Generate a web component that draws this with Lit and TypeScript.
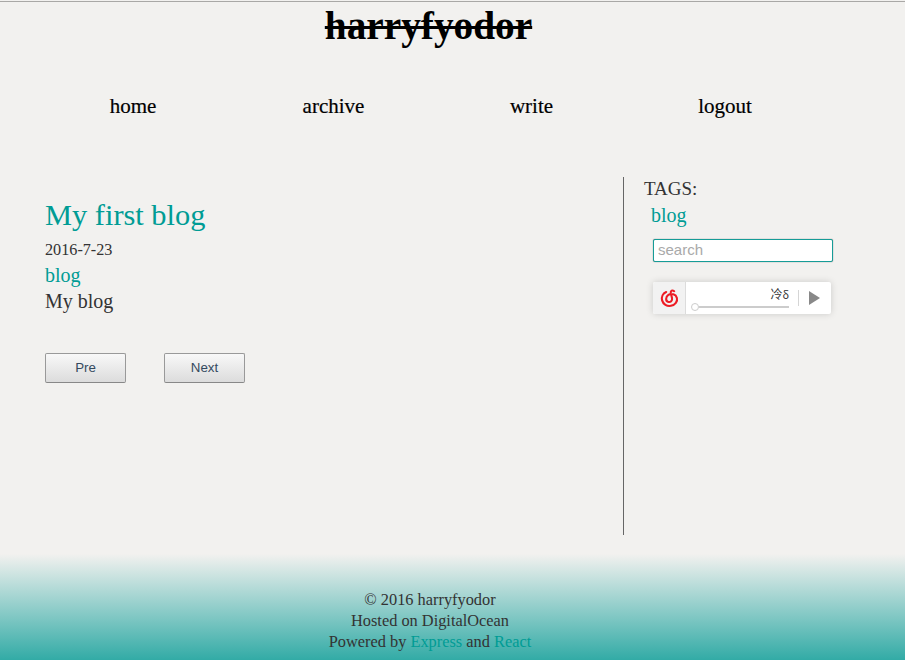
import { LitElement, html, css } from "lit";
import { customElement } from "lit/decorators.js";

@customElement("music-player")
class MusicPlayer extends LitElement {
  static styles = css`
    :host { display: flex; box-sizing: border-box; width: 178px; height: 32px; background: #fff; border-radius: 2px; box-shadow: 0 0 7px rgba(0, 0, 0, 0.16); }
    .logo { box-sizing: border-box; width: 33px; height: 32px; background: #f2f2f2; border-right: 1px solid #dcdcdc; border-radius: 2px 0 0 2px; }
    .logo svg, .play svg { display: block; }
    .track { width: 103px; padding-left: 5px; box-sizing: border-box; }
    .song { height: 18px; display: flex; justify-content: flex-end; }
    .name { white-space: nowrap; color: #333; font: 12px/24px "Noto Sans CJK SC", sans-serif; }
    .name span { font-size: 11px; }
    .bar { display: flex; align-items: center; height: 14px; }
    .knob { box-sizing: border-box; width: 8px; height: 8px; border: 1px solid #ccc; border-radius: 50%; background: #fff; }
    .rail { flex: 1; height: 2px; background: #ccc; }
    .play { margin: 8px 0 0 9px; height: 16px; border-left: 1px solid #d5d5d5; padding-left: 10px; }
  `;
  render() {
    return html`
      <div class="logo">
        <svg width="32" height="32" viewBox="0 0 32 32" fill="none" stroke="#ed1c24" stroke-width="2.1" stroke-linecap="round">
          <path d="M13.2 10C9.8 11.4 8.3 14.9 9.1 18.4C10.2 22.3 14 24.5 17.9 23.8C22.2 23 24.8 19.4 23.9 15.9C22.9 12.3 18.4 11 15.4 12.9C12.6 14.7 12.4 18.9 15 19.8C17.6 20.6 19.6 18.6 19 16L17.8 11.2C17.3 8.6 19.3 7.7 21.2 9.2"/>
        </svg>
      </div>
      <div class="track">
        <div class="song"><span class="name">冷<span>δ</span></span></div>
        <div class="bar"><span class="knob"></span><span class="rail"></span></div>
      </div>
      <div class="play">
        <svg width="11" height="16" viewBox="0 0 11 16"><path d="M0 1L11 8L0 15Z" fill="#888"/></svg>
      </div>
    `;
  }
}

@customElement("app-root")
class AppRoot extends LitElement {
  static styles = css`
    :host { display: flex; flex-direction: column; height: 660px; overflow: hidden; background: #f2f1ef; color: #333; font: 20px/26px "Liberation Serif", serif; padding-top: 1px; box-sizing: border-box; }
    a { color: #009c95; text-decoration: none; }
    .header { height: 176px; border-top: 1px solid #a9a8a6; box-sizing: border-box; flex: none; }
    .title { margin: 0; width: 857px; height: 48px; text-align: center; color: #000; font-size: 39.3px; line-height: 48px; font-weight: 700; text-decoration: line-through; text-decoration-thickness: 3px; }
    .nav { display: grid; grid-template-columns: 200px 201px 195px 192px; margin-top: 43px; padding-left: 33px; font-size: 21px; }
    .nav a { color: #000; text-align: center; -webkit-text-stroke: 0.2px #000; }
    .main { display: flex; height: 358px; flex: none; }
    .posts { box-sizing: border-box; width: 623px; padding: 20px 0 0 45px; }
    .heading { margin: 0; font-size: 30.4px; line-height: 36px; font-weight: 400; }
    .date { font-size: 16.2px; line-height: 24px; padding-top: 5px; }
    .tag { line-height: 26px; }
    .pager { display: flex; gap: 38px; margin-top: 39px; }
    .pager button { box-sizing: border-box; width: 81px; height: 30px; padding: 0 0 2px; border: 1px solid #999; border-bottom-color: #888; border-radius: 2px; background: linear-gradient(#f8f8f8, #dcdcdc); color: #34495e; font: 13.33px "Liberation Sans", sans-serif; }
    .side { border-left: 1px solid #666; padding-left: 20px; }
    .tags { font-size: 19px; line-height: 24px; }
    .links { padding-left: 7px; line-height: 28px; }
    .search { display: block; box-sizing: border-box; width: 180px; height: 23px; margin: 10px 0 20px 9px; padding: 0 4px 2px; border: 1px solid #169c97; border-radius: 2px; background: #fff; font: 15px "Liberation Sans", sans-serif; box-shadow: 0 0 1px #555; }
    .search::placeholder { color: #a9a9a9; opacity: 1; }
    music-player { margin-left: 9px; }
    .footer { box-sizing: border-box; margin-top: 19px; height: 106px; padding: 35px 45px 0 0; text-align: center; font-size: 16.35px; line-height: 21px; background: linear-gradient(#f2f1ef, #32aba6); }
  `;
  render() {
    return html`
      <header class="header">
        <h1 class="title">harryfyodor</h1>
        <nav class="nav">${["home", "archive", "write", "logout"].map((n) => html`<a>${n}</a>`)}</nav>
      </header>
      <main class="main">
        <section class="posts">
          <h2 class="heading"><a>My first blog</a></h2>
          <div class="date">2016-7-23</div>
          <div class="tag"><a>blog</a></div>
          <div>My blog</div>
          <div class="pager"><button>Pre</button><button>Next</button></div>
        </section>
        <aside class="side">
          <div class="tags">TAGS:</div>
          <div class="links"><a>blog</a></div>
          <input class="search" placeholder="search" />
          <music-player></music-player>
        </aside>
      </main>
      <footer class="footer">
        <div>© 2016 harryfyodor</div>
        <div>Hosted on DigitalOcean</div>
        <div>Powered by <a>Express</a> and <a>React</a></div>
      </footer>
    `;
  }
}
